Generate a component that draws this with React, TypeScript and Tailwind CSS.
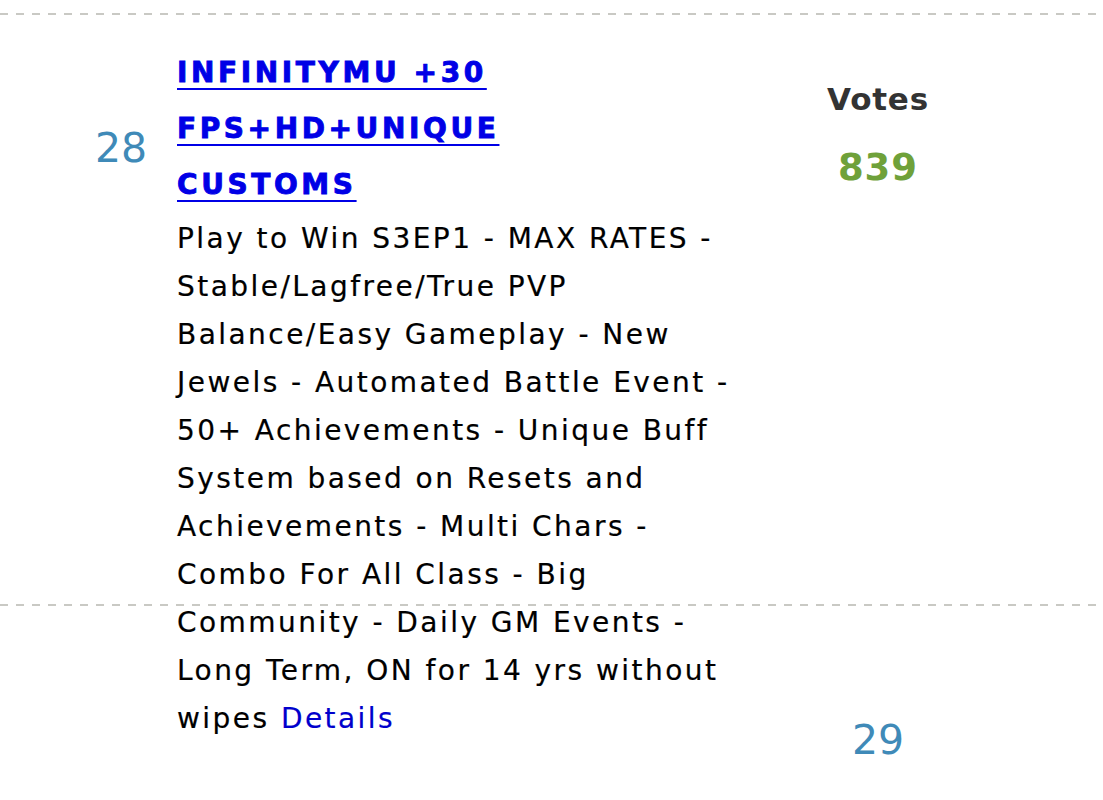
import React from 'react';

const dashed =
  'h-[2px] w-full bg-[repeating-linear-gradient(to_right,#c9c9c4_0px,#c9c9c4_8px,transparent_8px,transparent_16px)]';

const description =
  'Play to Win S3EP1 - MAX RATES - Stable/Lagfree/True PVP Balance/Easy Gameplay - New Jewels - Automated Battle Event - 50+ Achievements - Unique Buff System based on Resets and Achievements - Multi Chars - Combo For All Class - Big Community - Daily GM Events - Long Term, ON for 14 yrs without wipes';

export default function App() {
  return (
    <div className="w-[1103px] h-[800px] overflow-hidden bg-white font-['DejaVu_Sans',Verdana,sans-serif]">
      <div className={`mt-[13px] ${dashed}`} />

      <div className="flex h-[589px]">
        <div className="w-[165px] shrink-0 pt-[113px] pl-[95px]">
          <span className="text-[41px] leading-none text-[#3f8ab8]">28</span>
        </div>

        <div className="w-[575px] shrink-0 pt-[30px] pl-[12px] relative z-10">
          <a href="#" className="block w-[450px] text-[28px] leading-[56px] font-bold tracking-[3.6px] [-webkit-text-stroke:0.9px_#0000e6] text-[#0000e6] underline underline-offset-[6px] decoration-2">
            INFINITYMU +30 FPS+HD+UNIQUE CUSTOMS
          </a>
          <p className="mt-[2px] w-[562px] text-[28px] leading-[48px] tracking-[2.45px] [-webkit-text-stroke:0.2px_#000] text-black">
            {description}{' '}
            <a href="#" className="text-[#0000cc] [-webkit-text-stroke:0.2px_#0000cc]">Details</a>
          </p>
        </div>

        <div className="w-[276px] shrink-0 flex flex-col items-center pt-[69px]">
          <span className="text-[31px] leading-none font-bold tracking-[0.8px] text-[#333333]">Votes</span>
          <span className="mt-[34px] text-[37px] leading-none font-bold tracking-[1px] text-[#6fa13a]">839</span>
        </div>
      </div>

      <div className={dashed} />

      <div className="flex">
        <div className="w-[740px] shrink-0" />
        <div className="w-[276px] shrink-0 flex justify-center pt-[114px]">
          <span className="text-[41px] leading-none text-[#3f8ab8]">29</span>
        </div>
      </div>
    </div>
  );
}
